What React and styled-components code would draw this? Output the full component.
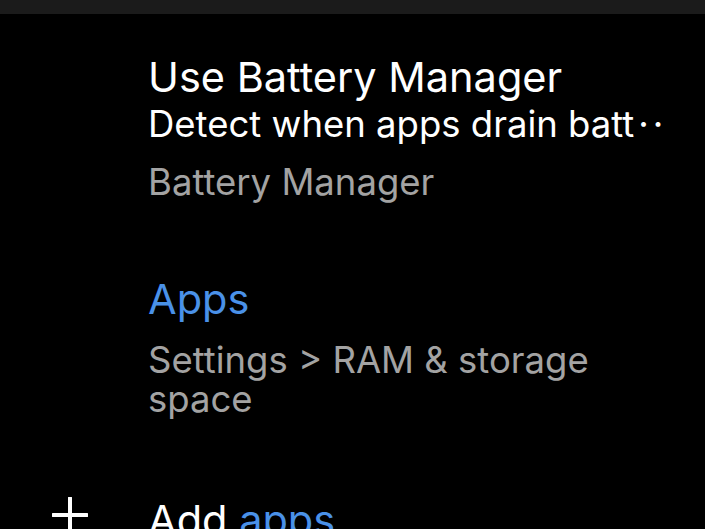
import styled, { createGlobalStyle } from "styled-components";

const Global = createGlobalStyle`
  html, body {
    margin: 0;
    background: #000;
  }
  body {
    font-family: Inter, Roboto, "Noto Sans", sans-serif;
    overflow: hidden;
  }
`;

export default function App() {
  return (
    <Screen>
      <Global />
      <TopBar />
      <Section gap={40}>
        <Row>
          <IconSlot />
          <Body>
            <Title>Use Battery Manager</Title>
            <Summary>
              Detect when apps drain batt<Dots>··</Dots>
            </Summary>
            <Meta top={16}>Battery Manager</Meta>
          </Body>
        </Row>
      </Section>
      <Section gap={74}>
        <Row>
          <IconSlot />
          <Body>
            <Title tone="link">Apps</Title>
            <Meta top={18}>Settings &gt; RAM &amp; storage space</Meta>
          </Body>
        </Row>
      </Section>
      <Section gap={78}>
        <Row>
          <IconSlot>
            <PlusIcon viewBox="0 0 36 36">
              <path d="M18 1v34M1 18h34" stroke="#fff" strokeWidth="4" strokeLinecap="round" />
            </PlusIcon>
          </IconSlot>
          <Body>
            <Title>
              Add <Link>apps</Link>
            </Title>
          </Body>
        </Row>
      </Section>
    </Screen>
  );
}

const Screen = styled.div`
  width: 705px;
  height: 529px;
  background: #000;
  overflow: hidden;
`;

const TopBar = styled.div`
  height: 14px;
  background: #1b1b1b;
`;

const Section = styled.section`
  margin-top: ${(p) => p.gap}px;
`;

const Row = styled.div`
  display: flex;
  align-items: flex-start;
`;

const IconSlot = styled.div`
  width: 148px;
  flex-shrink: 0;
  display: flex;
  justify-content: center;
  padding-right: 8px;
  box-sizing: border-box;
`;

const Body = styled.div`
  display: flex;
  flex-direction: column;
  min-width: 0;
  width: 520px;
`;

const Title = styled.div`
  font-size: 41.5px;
  line-height: 47px;
  color: ${(p) => (p.tone === "link" ? "#4a91e8" : "#fff")};
  white-space: nowrap;
`;

const Summary = styled.div`
  font-size: 36.5px;
  line-height: 46px;
  color: #fff;
  white-space: nowrap;
`;

const Dots = styled.span`
  margin-left: 4px;
  letter-spacing: 4px;
`;

const Meta = styled.div`
  margin-top: ${(p) => p.top}px;
  font-size: 36.5px;
  line-height: 39px;
  color: #a3a3a3;
`;

const Link = styled.span`
  color: #4a91e8;
`;

const PlusIcon = styled.svg`
  width: 36px;
  height: 36px;
`;
